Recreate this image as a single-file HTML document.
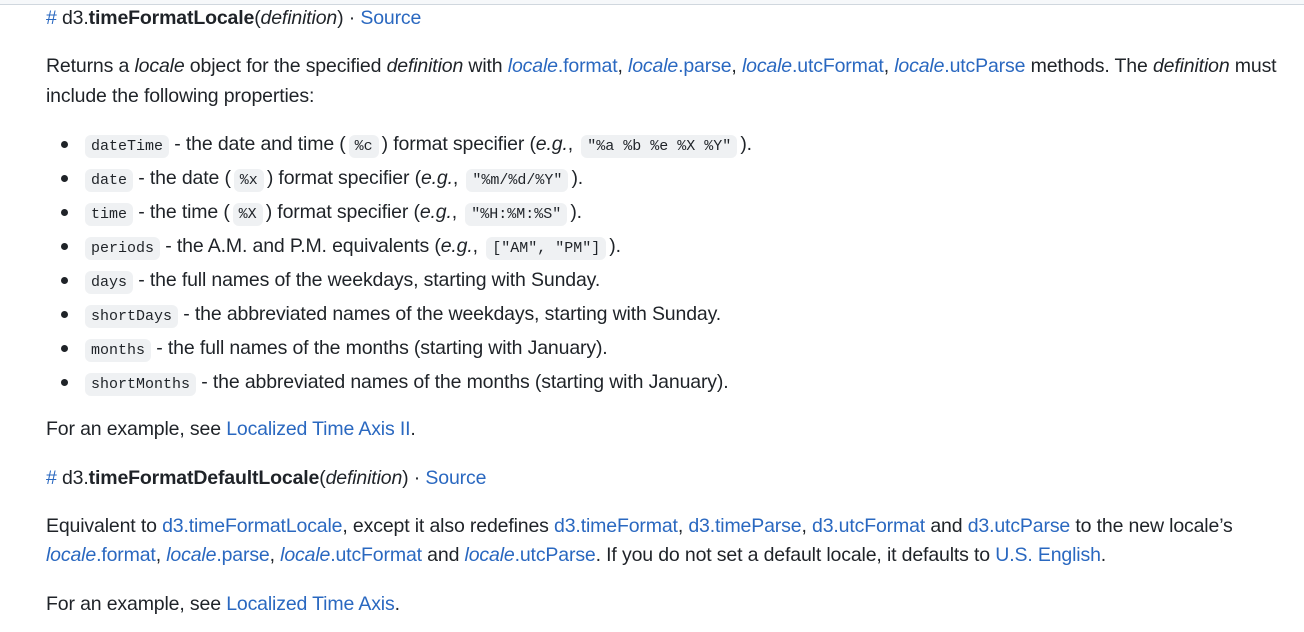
<!DOCTYPE html>
<html><head><meta charset="utf-8"><style>
html,body{margin:0;padding:0;background:#fff;width:1304px;height:632px;overflow:hidden}
body{font-family:"Liberation Sans",sans-serif;font-size:19.5px;color:#1f2328;position:relative}
.topline{position:absolute;left:0;top:0;width:1304px;height:4px;border-bottom:1px solid #d0d7de;background:#f6f8fa}
.l{position:absolute;left:46px;white-space:nowrap;line-height:30px;letter-spacing:-0.15px}
a{color:#2a68c0;text-decoration:none}
code{font-family:"Liberation Mono",monospace;font-size:15px;background:#eff1f3;border-radius:6px;padding:3px 6px;letter-spacing:0}
code.m{margin:0 3px}
.li{left:85px}
.dot{position:absolute;left:61px;width:7px;height:7px;border-radius:50%;background:#1f2328}
</style></head><body>
<div class="topline"></div>
<div class="l h" style="top:3px"><a class="hash">#</a> d3.<b>timeFormatLocale</b>(<i>definition</i>) · <a>Source</a></div>
<div class="l" style="top:51px">Returns a <i>locale</i> object for the specified <i>definition</i> with <a><i>locale</i>.format</a>, <a><i>locale</i>.parse</a>, <a><i>locale</i>.utcFormat</a>, <a><i>locale</i>.utcParse</a> methods. The <i>definition</i> must</div>
<div class="l" style="top:81px">include the following properties:</div>

<div class="dot" style="top:141px"></div><div class="l li" style="top:129px"><code>dateTime</code> - the date and time (<code class="m">%c</code>) format specifier (<i>e.g.</i>, <code class="m">"%a %b %e %X %Y"</code>).</div>
<div class="dot" style="top:175px"></div><div class="l li" style="top:163px"><code>date</code> - the date (<code class="m">%x</code>) format specifier (<i>e.g.</i>, <code class="m">"%m/%d/%Y"</code>).</div>
<div class="dot" style="top:209px"></div><div class="l li" style="top:197px"><code>time</code> - the time (<code class="m">%X</code>) format specifier (<i>e.g.</i>, <code class="m">"%H:%M:%S"</code>).</div>
<div class="dot" style="top:243px"></div><div class="l li" style="top:231px"><code>periods</code> - the A.M. and P.M. equivalents (<i>e.g.</i>, <code class="m">["AM", "PM"]</code>).</div>
<div class="dot" style="top:277px"></div><div class="l li" style="top:265px"><code>days</code> - the full names of the weekdays, starting with Sunday.</div>
<div class="dot" style="top:311px"></div><div class="l li" style="top:299px"><code>shortDays</code> - the abbreviated names of the weekdays, starting with Sunday.</div>
<div class="dot" style="top:345px"></div><div class="l li" style="top:333px"><code>months</code> - the full names of the months (starting with January).</div>
<div class="dot" style="top:379px"></div><div class="l li" style="top:367px"><code>shortMonths</code> - the abbreviated names of the months (starting with January).</div>

<div class="l" style="top:414px">For an example, see <a>Localized Time Axis II</a>.</div>
<div class="l h" style="top:463px"><a class="hash">#</a> d3.<b>timeFormatDefaultLocale</b>(<i>definition</i>) · <a>Source</a></div>
<div class="l" style="top:511px">Equivalent to <a>d3.timeFormatLocale</a>, except it also redefines <a>d3.timeFormat</a>, <a>d3.timeParse</a>, <a>d3.utcFormat</a> and <a>d3.utcParse</a> to the new locale’s</div>
<div class="l" style="top:540px"><a><i>locale</i>.format</a>, <a><i>locale</i>.parse</a>, <a><i>locale</i>.utcFormat</a> and <a><i>locale</i>.utcParse</a>. If you do not set a default locale, it defaults to <a>U.S. English</a>.</div>
<div class="l" style="top:589px">For an example, see <a>Localized Time Axis</a>.</div>
</body></html>
